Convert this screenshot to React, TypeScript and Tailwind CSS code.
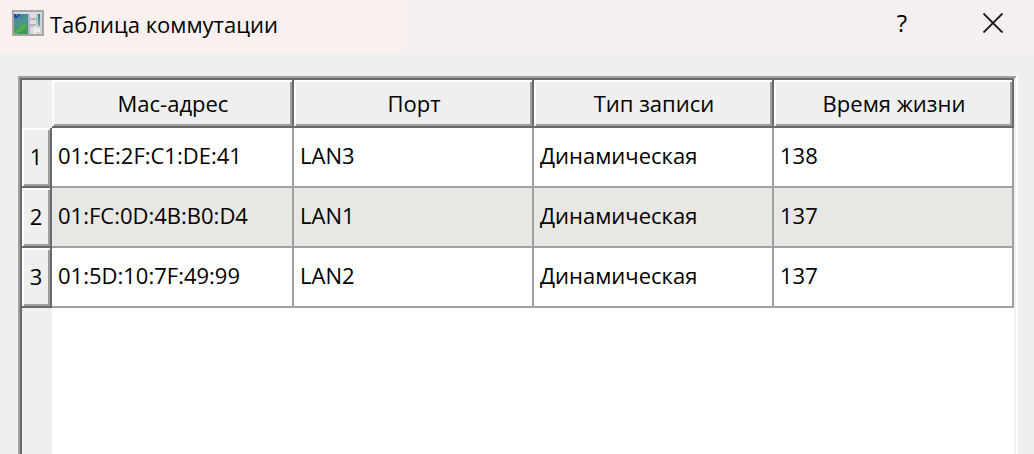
const columns = ["Mac-адрес", "Порт", "Тип записи", "Время жизни"];

const rows = [
  ["01:CE:2F:C1:DE:41", "LAN3", "Динамическая", "138"],
  ["01:FC:0D:4B:B0:D4", "LAN1", "Динамическая", "137"],
  ["01:5D:10:7F:49:99", "LAN2", "Динамическая", "137"],
];

const raised =
  "bg-[#efefef] font-normal shadow-[inset_-2px_-2px_#696969,inset_2px_2px_#ffffff,inset_-4px_-4px_#a0a0a0]";

function AppIcon() {
  return (
    <svg width="32" height="26" viewBox="0 0 32 26" aria-hidden="true">
      <defs>
        <linearGradient id="screen" x1="0" y1="0" x2="0.3" y2="1">
          <stop offset="0" stopColor="#3d78a8" />
          <stop offset="0.45" stopColor="#4a9594" />
          <stop offset="1" stopColor="#3f9c50" />
        </linearGradient>
        <linearGradient id="side" x1="0" y1="0" x2="0" y2="1">
          <stop offset="0" stopColor="#35808c" />
          <stop offset="1" stopColor="#6ab39f" />
        </linearGradient>
      </defs>
      <rect width="32" height="26" fill="#a8a5a5" />
      <rect x="2" y="2" width="28" height="22" fill="#cfd2d6" />
      <rect x="2" y="2" width="28" height="2" fill="#dcdde2" />
      <rect x="2" y="4" width="14" height="20" fill="url(#screen)" />
      <path d="M2 4h2v2h2V4h2v2H6v2H2z" fill="#2c45a6" />
      <path d="M2 22h2v-2h2v-2h2v-2h2v-2h4v4h-2v2h-2v2H6v2H2z" fill="#55ab58" />
      <rect x="16" y="4" width="2" height="20" fill="#b5b3d6" />
      <path d="M18 4h6v4h-6zM18 10h6v4h-6z" fill="#dedede" />
      <path d="M18 8h6v2h-6zM18 14h6v2h-6z" fill="#b4b4b8" />
      <rect x="24" y="4" width="2" height="10" fill="#a9cbd0" />
      <rect x="26" y="4" width="2" height="12" fill="url(#side)" />
      <path d="M18 18h4v6h-4z" fill="#dadada" />
      <path d="M22 16h2v8h-2zM24 18h4v4h-4z" fill="#eeeeee" />
    </svg>
  );
}

export default function App() {
  return (
    <div className="flex min-h-screen flex-col bg-[#efefef] font-['Open_Sans','Noto_Sans',sans-serif] text-[22px] leading-7 text-black">
      <header className="flex h-[54px] items-center bg-linear-to-r from-[#faf0ee] from-38% to-[#f5eff0] to-40% pr-0 pb-2 pl-3">
        <AppIcon />
        <h1 className="ml-1.5 flex-1 pt-0.5">Таблица коммутации</h1>
        <button type="button" aria-label="Справка" className="flex h-11 w-[100px] items-center justify-center text-2xl">
          ?
        </button>
        <button type="button" aria-label="Закрыть" className="flex h-11 w-[82px] items-center justify-center">
          <svg width="20" height="20" viewBox="0 0 20 20" fill="none" stroke="#111" strokeWidth="1.8" aria-hidden="true">
            <path d="M.5.5l19 19M19.5.5l-19 19" />
          </svg>
        </button>
      </header>
      <main className="flex flex-1 flex-col px-4 pt-[22px] pl-[18px]">
        <div className="flex flex-1 flex-col bg-white px-1 pt-1 shadow-[inset_-2px_0_#ffffff,inset_2px_2px_#a0a0a0,inset_-4px_0_#f0f0f0,inset_4px_4px_#696969]">
          <table className="w-full table-fixed border-separate border-spacing-0 text-left">
            <colgroup>
              <col className="w-[30px]" />
              <col className="w-[242px]" />
              <col />
              <col />
              <col />
            </colgroup>
            <thead>
              <tr className="h-12">
                <td className="bg-[#efefef] p-0" />
                {columns.map((name) => (
                  <th key={name} scope="col" className={`${raised} p-0 pb-0.5 text-center`}>
                    {name}
                  </th>
                ))}
              </tr>
            </thead>
            <tbody>
              {rows.map((row, i) => (
                <tr key={row[0]} className="h-[60px] even:bg-[#e8e7e3]">
                  <th scope="row" className={`${raised} p-0 pr-0.5 pb-1 text-center`}>
                    {i + 1}
                  </th>
                  {row.map((value, j) => (
                    <td key={j} className="border-r-2 border-b-2 border-[#a0a0a0] p-0 pb-1 pl-1.5">
                      {value}
                    </td>
                  ))}
                </tr>
              ))}
            </tbody>
          </table>
          <div className="w-[30px] flex-1 bg-[#efefef]" />
        </div>
      </main>
    </div>
  );
}
